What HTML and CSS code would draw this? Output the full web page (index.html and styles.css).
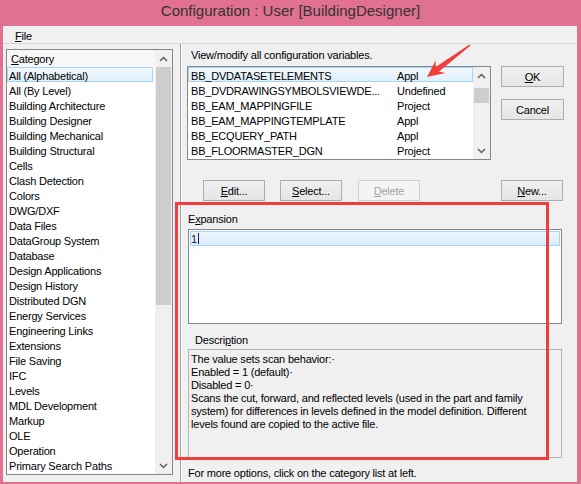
FILE: index.html
```html
<!DOCTYPE html>
<html>
<head>
<meta charset="utf-8">
<title>Configuration</title>
<link rel="stylesheet" href="styles.css">
</head>
<body>
<div class="window">
  <div class="titlebar">Configuration : User [BuildingDesigner]</div>
  <div class="client">
    <div class="menubar"><span class="menu-item"><u>F</u>ile</span></div>
    <div class="main">
      <div class="left">
        <div class="listbox cat-list">
          <div class="list-body">
            <div class="list-header"><u>C</u>ategory</div>
            <div class="row selected">All (Alphabetical)</div>
            <div class="row">All (By Level)</div>
            <div class="row">Building Architecture</div>
            <div class="row">Building Designer</div>
            <div class="row">Building Mechanical</div>
            <div class="row">Building Structural</div>
            <div class="row">Cells</div>
            <div class="row">Clash Detection</div>
            <div class="row">Colors</div>
            <div class="row">DWG/DXF</div>
            <div class="row">Data Files</div>
            <div class="row">DataGroup System</div>
            <div class="row">Database</div>
            <div class="row">Design Applications</div>
            <div class="row">Design History</div>
            <div class="row">Distributed DGN</div>
            <div class="row">Energy Services</div>
            <div class="row">Engineering Links</div>
            <div class="row">Extensions</div>
            <div class="row">File Saving</div>
            <div class="row">IFC</div>
            <div class="row">Levels</div>
            <div class="row">MDL Development</div>
            <div class="row">Markup</div>
            <div class="row">OLE</div>
            <div class="row">Operation</div>
            <div class="row">Primary Search Paths</div>
          </div>
          <div class="vscroll">
            <div class="sb-btn"><svg width="9" height="6" viewBox="0 0 9 6"><polyline points="1,5 4.5,1.5 8,5" fill="none" stroke="#606060" stroke-width="1.5"/></svg></div>
            <div class="sb-track"><div class="sb-thumb cat-thumb"></div></div>
            <div class="sb-btn"><svg width="9" height="6" viewBox="0 0 9 6"><polyline points="1,1 4.5,4.5 8,1" fill="none" stroke="#606060" stroke-width="1.5"/></svg></div>
          </div>
        </div>
      </div>
      <div class="right">
        <div class="label view-label">View/modify all configuration variables.</div>
        <div class="top-row">
          <div class="listbox var-list">
            <div class="list-body">
              <div class="row var-row selected"><span class="col-name">BB_DVDATASETELEMENTS</span><span>Appl</span></div>
              <div class="row var-row"><span class="col-name">BB_DVDRAWINGSYMBOLSVIEWDE...</span><span>Undefined</span></div>
              <div class="row var-row"><span class="col-name">BB_EAM_MAPPINGFILE</span><span>Project</span></div>
              <div class="row var-row"><span class="col-name">BB_EAM_MAPPINGTEMPLATE</span><span>Appl</span></div>
              <div class="row var-row"><span class="col-name">BB_ECQUERY_PATH</span><span>Appl</span></div>
              <div class="row var-row"><span class="col-name">BB_FLOORMASTER_DGN</span><span>Project</span></div>
            </div>
            <div class="vscroll">
              <div class="sb-btn"><svg width="9" height="6" viewBox="0 0 9 6"><polyline points="1,5 4.5,1.5 8,5" fill="none" stroke="#606060" stroke-width="1.5"/></svg></div>
              <div class="sb-track"><div class="sb-thumb var-thumb"></div></div>
              <div class="sb-btn"><svg width="9" height="6" viewBox="0 0 9 6"><polyline points="1,1 4.5,4.5 8,1" fill="none" stroke="#606060" stroke-width="1.5"/></svg></div>
            </div>
          </div>
          <div class="side-buttons">
            <div class="btn btn-wide"><u>O</u>K</div>
            <div class="btn btn-wide btn-cancel">Cancel</div>
          </div>
        </div>
        <div class="button-row">
          <div class="btn btn-edit"><u>E</u>dit...</div>
          <div class="btn btn-select"><u>S</u>elect...</div>
          <div class="btn btn-delete disabled"><u>D</u>elete</div>
          <div class="btn btn-new"><u>N</u>ew...</div>
        </div>
        <div class="label exp-label">E<u>x</u>pansion</div>
        <div class="exp-box">
          <div class="exp-row">1<span class="caret"></span></div>
        </div>
        <div class="label desc-label">Descri<u>p</u>tion</div>
        <div class="desc-box">The value sets scan behavior:·<br>Enabled = 1 (default)·<br>Disabled = 0·<br>Scans the cut, forward, and reflected levels (used in the part and family<br>system) for differences in levels defined in the model definition. Different<br>levels found are copied to the active file.</div>
        <div class="label footer-label">For more options, click on the category list at left.</div>
      </div>
    </div>
  </div>
  <svg class="annot-arrow" width="581" height="484" viewBox="0 0 581 484">
    <polygon points="427,77 445.4,73.1 439.1,71.4 470.5,45.6 469.5,44.4 435.7,66.9 435.7,60.4" fill="#f23d3d"/>
  </svg>
  <div class="annot-rect"></div>
</div>
</body>
</html>
```
FILE: styles.css
```css
* { box-sizing: border-box; }
html, body { margin: 0; padding: 0; }
body {
  width: 581px;
  height: 484px;
  overflow: hidden;
  background: #e07190;
  font-family: "Liberation Sans", Arial, sans-serif;
  font-size: 11px;
  letter-spacing: -0.2px;
  color: #000;
}
u { text-decoration: underline; text-underline-offset: 1px; }
.window {
  position: relative;
  width: 581px;
  height: 484px;
  display: flex;
  flex-direction: column;
  background: #e07190;
}
.titlebar {
  height: 26px;
  line-height: 22px;
  text-align: center;
  font-size: 15px;
  letter-spacing: 0;
  color: #333333;
  flex: none;
}
.client {
  flex: 1;
  margin: 0 4px 2px 3px;
  background: #f0f0f0;
  display: flex;
  flex-direction: column;
  min-height: 0;
}
.menubar {
  height: 18px;
  line-height: 20px;
  border-bottom: 1px solid #dadada;
  padding-left: 12px;
  flex: none;
}
.main {
  flex: 1;
  display: flex;
  min-height: 0;
}
.left {
  width: 177px;
  padding: 5px 0 0 3px;
  flex: none;
}
.listbox {
  border: 1px solid #828790;
  background: #fff;
  display: flex;
  overflow: hidden;
}
.cat-list { width: 167px; height: 426px; }
.list-body { flex: 1; overflow: hidden; min-width: 0; }
.list-header {
  height: 17px;
  line-height: 19px;
  padding-left: 4px;
  background: #f7f7f7;
}
.row {
  height: 15px;
  line-height: 19px;
  padding-left: 2px;
  white-space: nowrap;
}
.row.selected {
  background: linear-gradient(#f3f9fe, #e0effb);
  box-shadow: inset 0 0 0 1px #a6d6f5;
}
.cat-list .row.selected { margin-right: 2px; }
.vscroll {
  width: 17px;
  flex: none;
  display: flex;
  flex-direction: column;
  background: #f0f0f0;
}
.sb-btn {
  height: 17px;
  flex: none;
  display: flex;
  align-items: center;
  justify-content: center;
}
.sb-btn svg { display: block; }
.sb-track { flex: 1; }
.sb-thumb { margin: 0 1px; background: #cdcdcd; }
.cat-thumb { height: 238px; }
.var-thumb { height: 15px; margin-top: 4px; }

.right {
  flex: 1;
  border-left: 1px solid #a0a0a0;
  box-shadow: inset 1px 0 #ffffff;
  padding: 5px 0 0 6px;
  display: flex;
  flex-direction: column;
  min-width: 0;
}
.label { line-height: 13px; height: 13px; white-space: nowrap; }
.view-label { margin-left: 4px; }
.top-row { display: flex; margin-top: 4px; }
.var-list { width: 304px; height: 94px; }
.var-row { display: flex; padding-left: 3px; }
.col-name { width: 206px; flex: none; overflow: hidden; }
.side-buttons { margin-left: 10px; display: flex; flex-direction: column; }
.btn {
  width: 62px;
  height: 21px;
  border: 1px solid #adadad;
  background: linear-gradient(#f0f0f0, #e5e5e5);
  text-align: center;
  line-height: 20px;
  white-space: nowrap;
}
.btn-wide { width: 63px; }
.btn-cancel { margin-top: 12px; }
.button-row { display: flex; margin-top: 20px; }
.btn-edit { margin-left: 16px; }
.btn-select { margin-left: 15px; }
.btn-delete { margin-left: 16px; }
.btn-new { margin-left: 81px; }
.btn.disabled {
  border-color: #d0d0d0;
  background: #f4f4f4;
  color: #a3a3a3;
}
.exp-label { margin-top: 12px; margin-left: 1px; }
.exp-box {
  margin-top: 3px;
  margin-left: 1px;
  width: 374px;
  height: 95px;
  border: 1px solid #828790;
  background: #fff;
  padding: 1px;
}
.exp-row {
  height: 15px;
  line-height: 17px;
  padding-left: 1px;
  color: #1e1640;
  background: linear-gradient(#eef7fe, #d9ecfb);
  box-shadow: inset 0 0 0 1px #a6d6f5;
  display: flex;
  align-items: flex-start;
}
.caret {
  width: 1px;
  height: 11px;
  margin-top: 2px;
  margin-left: 1px;
  background: #4a0a6a;
}
.desc-label { margin-top: 10px; margin-left: 8px; }
.desc-box {
  margin-top: 2px;
  margin-left: 1px;
  width: 374px;
  height: 109px;
  border: 1px solid #b4b4b4;
  padding: 3px 2px;
  line-height: 13px;
  white-space: nowrap;
  overflow: hidden;
}
.footer-label { margin-top: 9px; margin-left: 1px; }

.annot-arrow {
  position: absolute;
  left: 0;
  top: 0;
  pointer-events: none;
}
.annot-rect {
  position: absolute;
  left: 175px;
  top: 202px;
  width: 374px;
  height: 258px;
  border: 3px solid #f23d3d;
  pointer-events: none;
}
```
